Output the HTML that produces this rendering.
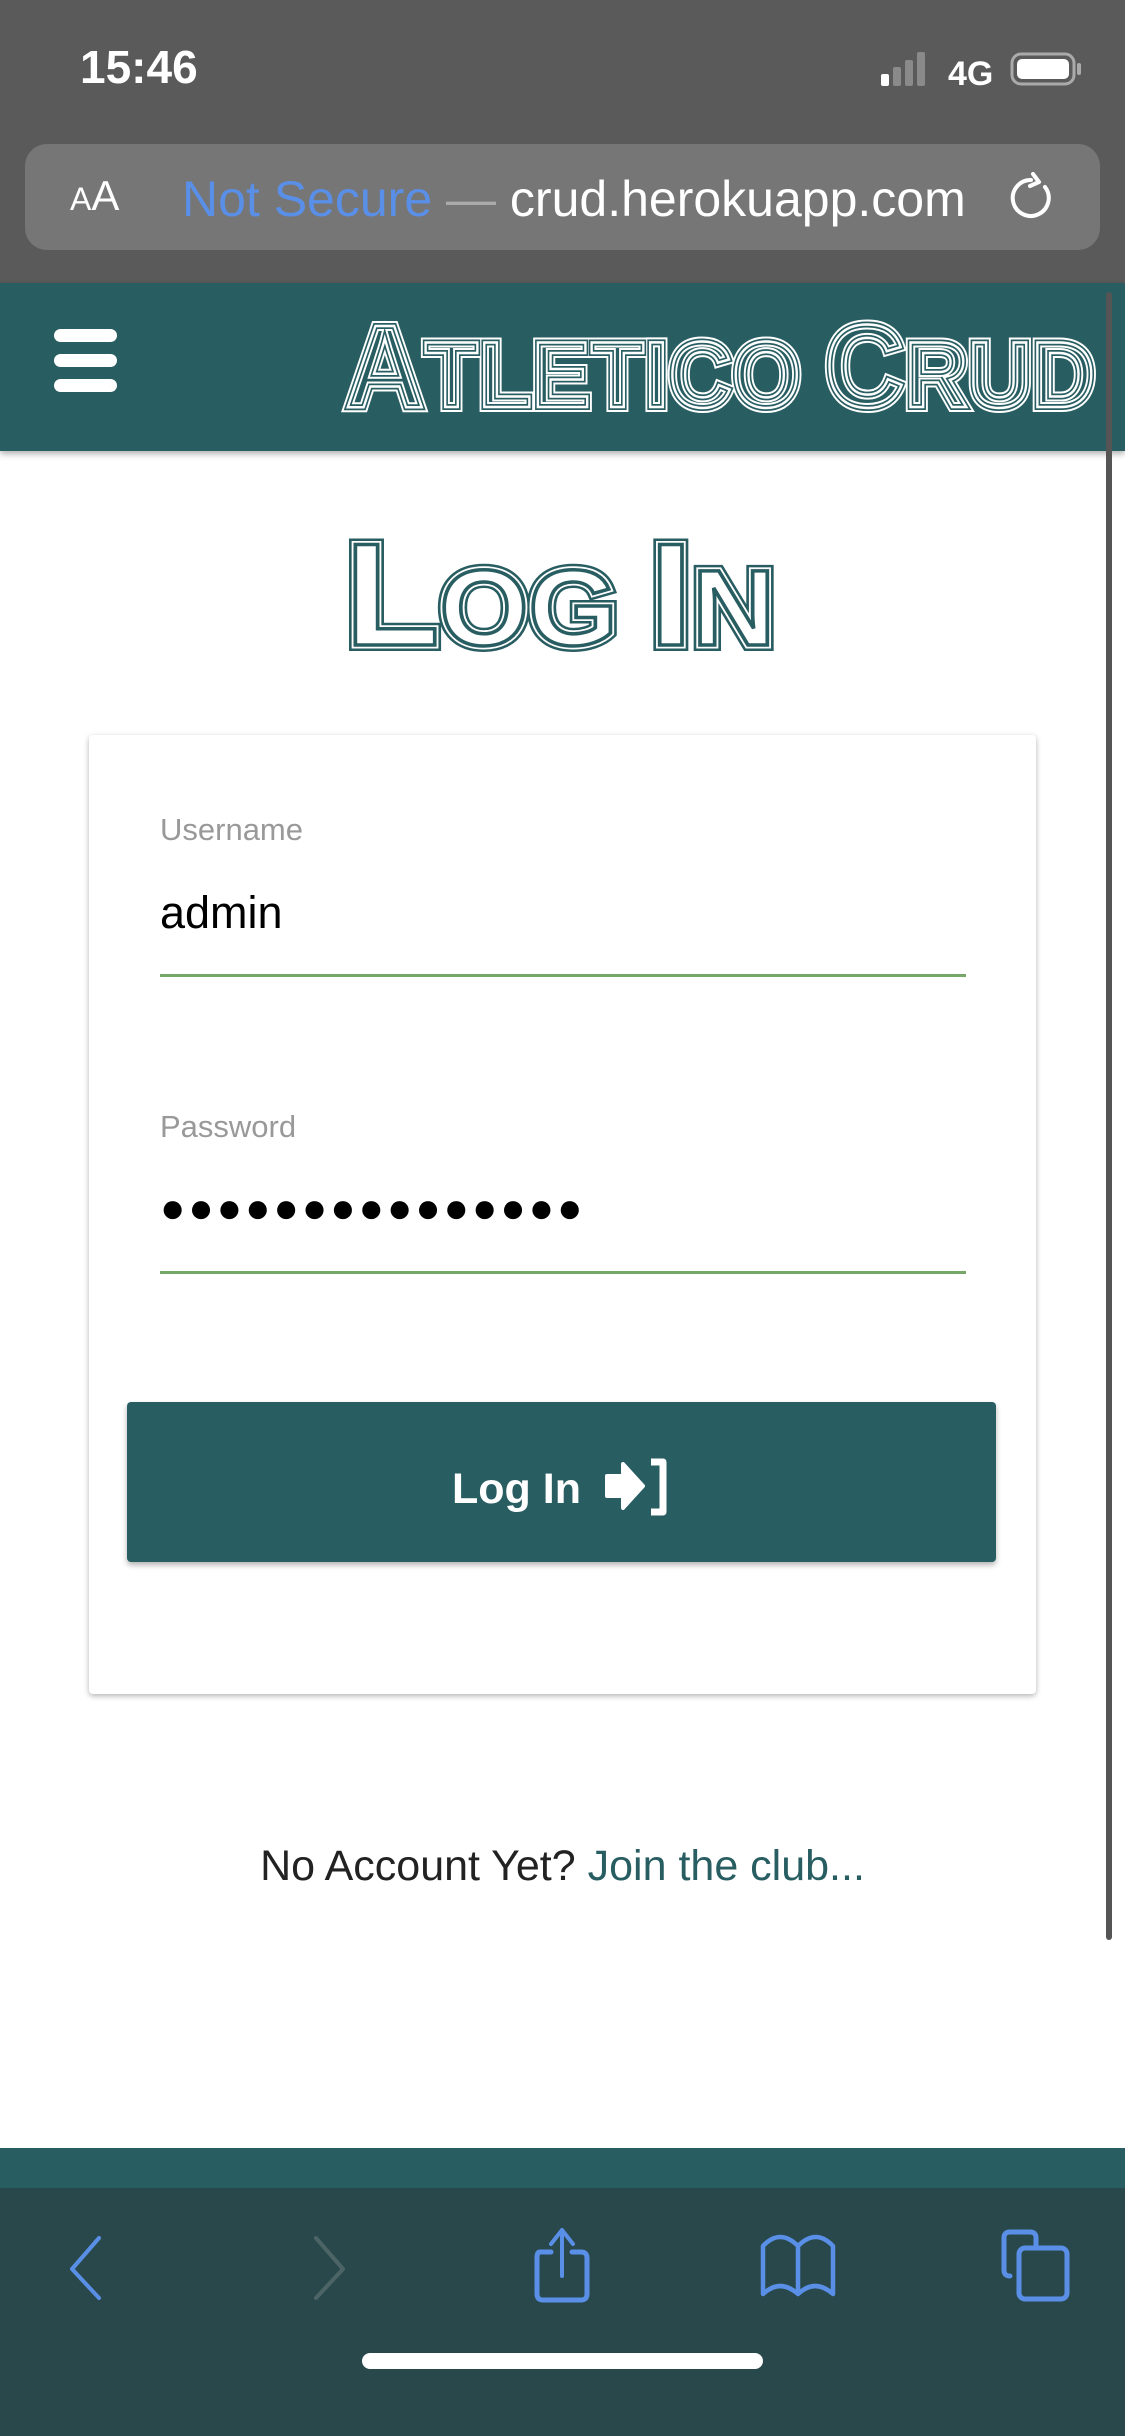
<!DOCTYPE html>
<html><head><meta charset="utf-8"><style>
*{margin:0;padding:0;box-sizing:border-box}
body{width:1125px;height:2436px;position:relative;background:#fff;font-family:"Liberation Sans",sans-serif;overflow:hidden}
.a{position:absolute}
</style></head><body>
<div class="a" style="left:0;top:0;width:1125px;height:283px;background:#5a5a5a"></div>
<div class="a" style="left:80px;top:40px;color:#fff;font-size:46px;font-weight:bold">15:46</div>
<svg class="a" style="left:875px;top:48px" width="230" height="42">
<rect x="6" y="26" width="8" height="12" rx="2" fill="#fff"/>
<rect x="18" y="19" width="8" height="19" rx="2" fill="#8a8a8a"/>
<rect x="30" y="12" width="8" height="26" rx="2" fill="#8a8a8a"/>
<rect x="42" y="4" width="8" height="34" rx="2" fill="#8a8a8a"/>
<text x="73" y="37" fill="#fff" font-size="34" font-family="Liberation Sans" font-weight="bold">4G</text>
<rect x="137" y="6" width="62" height="30" rx="9" fill="none" stroke="#aaa" stroke-width="3"/>
<rect x="142" y="11" width="52" height="20" rx="5" fill="#fff"/>
<rect x="202" y="15" width="4" height="12" rx="2" fill="#aaa"/>
</svg>
<div class="a" style="left:25px;top:144px;width:1075px;height:106px;border-radius:22px;background:#767676"></div>
<div class="a" style="left:70px;top:172px;color:#fff;font-size:42px"><span style="font-size:32px">A</span>A</div>
<div class="a" style="left:182px;top:170px;font-size:50px;white-space:nowrap"><span style="color:#5a8fe8">Not Secure</span><span style="color:#aaa"> — </span><span style="color:#fff">crud.herokuapp.com</span></div>
<svg class="a" style="left:1005px;top:172px" width="52" height="52"><path d="M26 8 A18 18 0 1 0 40 15" fill="none" stroke="#fff" stroke-width="4" stroke-linecap="round"/><path d="M28 2 L34 10 L25 14" fill="none" stroke="#fff" stroke-width="4" stroke-linecap="round" stroke-linejoin="round"/></svg>

<div class="a" style="left:0;top:283px;width:1125px;height:168px;background:#285d62;box-shadow:0 3px 6px rgba(0,0,0,.3)"></div>
<div class="a" style="left:54px;top:329px;width:63px;height:13px;border-radius:7px;background:#fff"></div>
<div class="a" style="left:54px;top:354px;width:63px;height:13px;border-radius:7px;background:#fff"></div>
<div class="a" style="left:54px;top:379px;width:63px;height:13px;border-radius:7px;background:#fff"></div>
<svg class="a" style="left:340px;top:310px" width="785" height="110">
<g font-family="Liberation Sans" font-weight="bold">
<text x="5" y="97" textLength="750" lengthAdjust="spacingAndGlyphs" font-size="94" fill="none" stroke="#fff" stroke-width="10"><tspan font-size="118">A</tspan>TLETICO <tspan font-size="118">C</tspan>RUD</text>
<text x="5" y="97" textLength="750" lengthAdjust="spacingAndGlyphs" font-size="94" fill="none" stroke="#285d62" stroke-width="6"><tspan font-size="118">A</tspan>TLETICO <tspan font-size="118">C</tspan>RUD</text>
<text x="5" y="97" textLength="750" lengthAdjust="spacingAndGlyphs" font-size="94" fill="none" stroke="#fff" stroke-width="2.5"><tspan font-size="118">A</tspan>TLETICO <tspan font-size="118">C</tspan>RUD</text>
</g></svg>
<div class="a" style="left:1106px;top:292px;width:6px;height:1648px;border-radius:3px;background:#555"></div>

<svg class="a" style="left:335px;top:530px" width="460" height="125">
<g font-family="Liberation Sans" font-weight="bold">
<text x="10" y="115" textLength="430" lengthAdjust="spacingAndGlyphs" font-size="108" fill="none" stroke="#285d62" stroke-width="12"><tspan font-size="146">L</tspan>OG <tspan font-size="146">I</tspan>N</text>
<text x="10" y="115" textLength="430" lengthAdjust="spacingAndGlyphs" font-size="108" fill="none" stroke="#fff" stroke-width="7"><tspan font-size="146">L</tspan>OG <tspan font-size="146">I</tspan>N</text>
<text x="10" y="115" textLength="430" lengthAdjust="spacingAndGlyphs" font-size="108" fill="#fff" stroke="#285d62" stroke-width="3.5"><tspan font-size="146">L</tspan>OG <tspan font-size="146">I</tspan>N</text>
</g></svg>

<div class="a" style="left:89px;top:735px;width:947px;height:959px;background:#fff;border-radius:4px;box-shadow:0 2px 6px rgba(0,0,0,.3)"></div>
<div class="a" style="left:160px;top:812px;color:#999;font-size:31px">Username</div>
<div class="a" style="left:160px;top:887px;color:#000;font-size:45px">admin</div>
<div class="a" style="left:160px;top:974px;width:806px;height:3px;background:#75a769"></div>
<div class="a" style="left:160px;top:1109px;color:#999;font-size:31px">Password</div>
<div class="a" style="left:160px;top:1184px;color:#000;font-size:42px;letter-spacing:3px">●●●●●●●●●●●●●●●</div>
<div class="a" style="left:160px;top:1271px;width:806px;height:3px;background:#75a769"></div>
<div class="a" style="left:127px;top:1402px;width:869px;height:160px;background:#285d62;border-radius:4px;box-shadow:0 3px 6px rgba(0,0,0,.3)"></div>
<div class="a" style="left:452px;top:1465px;color:#fff;font-size:43px;font-weight:bold">Log In</div>
<svg class="a" style="left:603px;top:1456px" width="70" height="62"><path d="M4 20 H20 V8 L40 30 L20 52 V40 H4 Z" fill="#fff" stroke="#fff" stroke-width="4" stroke-linejoin="round"/><path d="M48 6 H60 V56 H48" fill="none" stroke="#fff" stroke-width="7" stroke-linejoin="round"/></svg>
<div class="a" style="left:0;top:1842px;width:1125px;text-align:center;font-size:43px;color:#222">No Account Yet? <span style="color:#285d62">Join the club...</span></div>

<div class="a" style="left:0;top:2148px;width:1125px;height:40px;background:#285d62"></div>
<div class="a" style="left:0;top:2188px;width:1125px;height:248px;background:#29484b"></div>
<svg class="a" style="left:0;top:2188px" width="1125" height="248" fill="none" stroke-linecap="round" stroke-linejoin="round" stroke-width="4">
<path d="M99 50 L72 81 L99 110" stroke="#5a8fe8"/>
<path d="M316 50 L343 81 L316 110" stroke="#4c6466"/>
<path d="M551 64 H540 Q537 64 537 70 V106 Q537 112 543 112 H581 Q587 112 587 106 V70 Q587 64 581 64 H572" stroke="#5a8fe8" stroke-width="5"/>
<path d="M562 88 V42 M551 56 L562 42 L573 56" stroke="#5a8fe8"/>
<path d="M763 58 Q780 40 798 58 Q816 40 833 58 V106 Q815 90 798 106 Q780 90 763 106 Z M798 58 V106" stroke="#5a8fe8" stroke-width="4.5"/>
<path d="M1010 88 Q1004 88 1004 82 V50 Q1004 44 1010 44 H1030 Q1036 44 1036 50 V60" stroke="#5a8fe8" stroke-width="5"/>
<rect x="1019" y="60" width="48" height="51" rx="6" stroke="#5a8fe8" stroke-width="5"/>
</svg>
<div class="a" style="left:362px;top:2353px;width:401px;height:16px;border-radius:8px;background:#fff"></div>
</body></html>
